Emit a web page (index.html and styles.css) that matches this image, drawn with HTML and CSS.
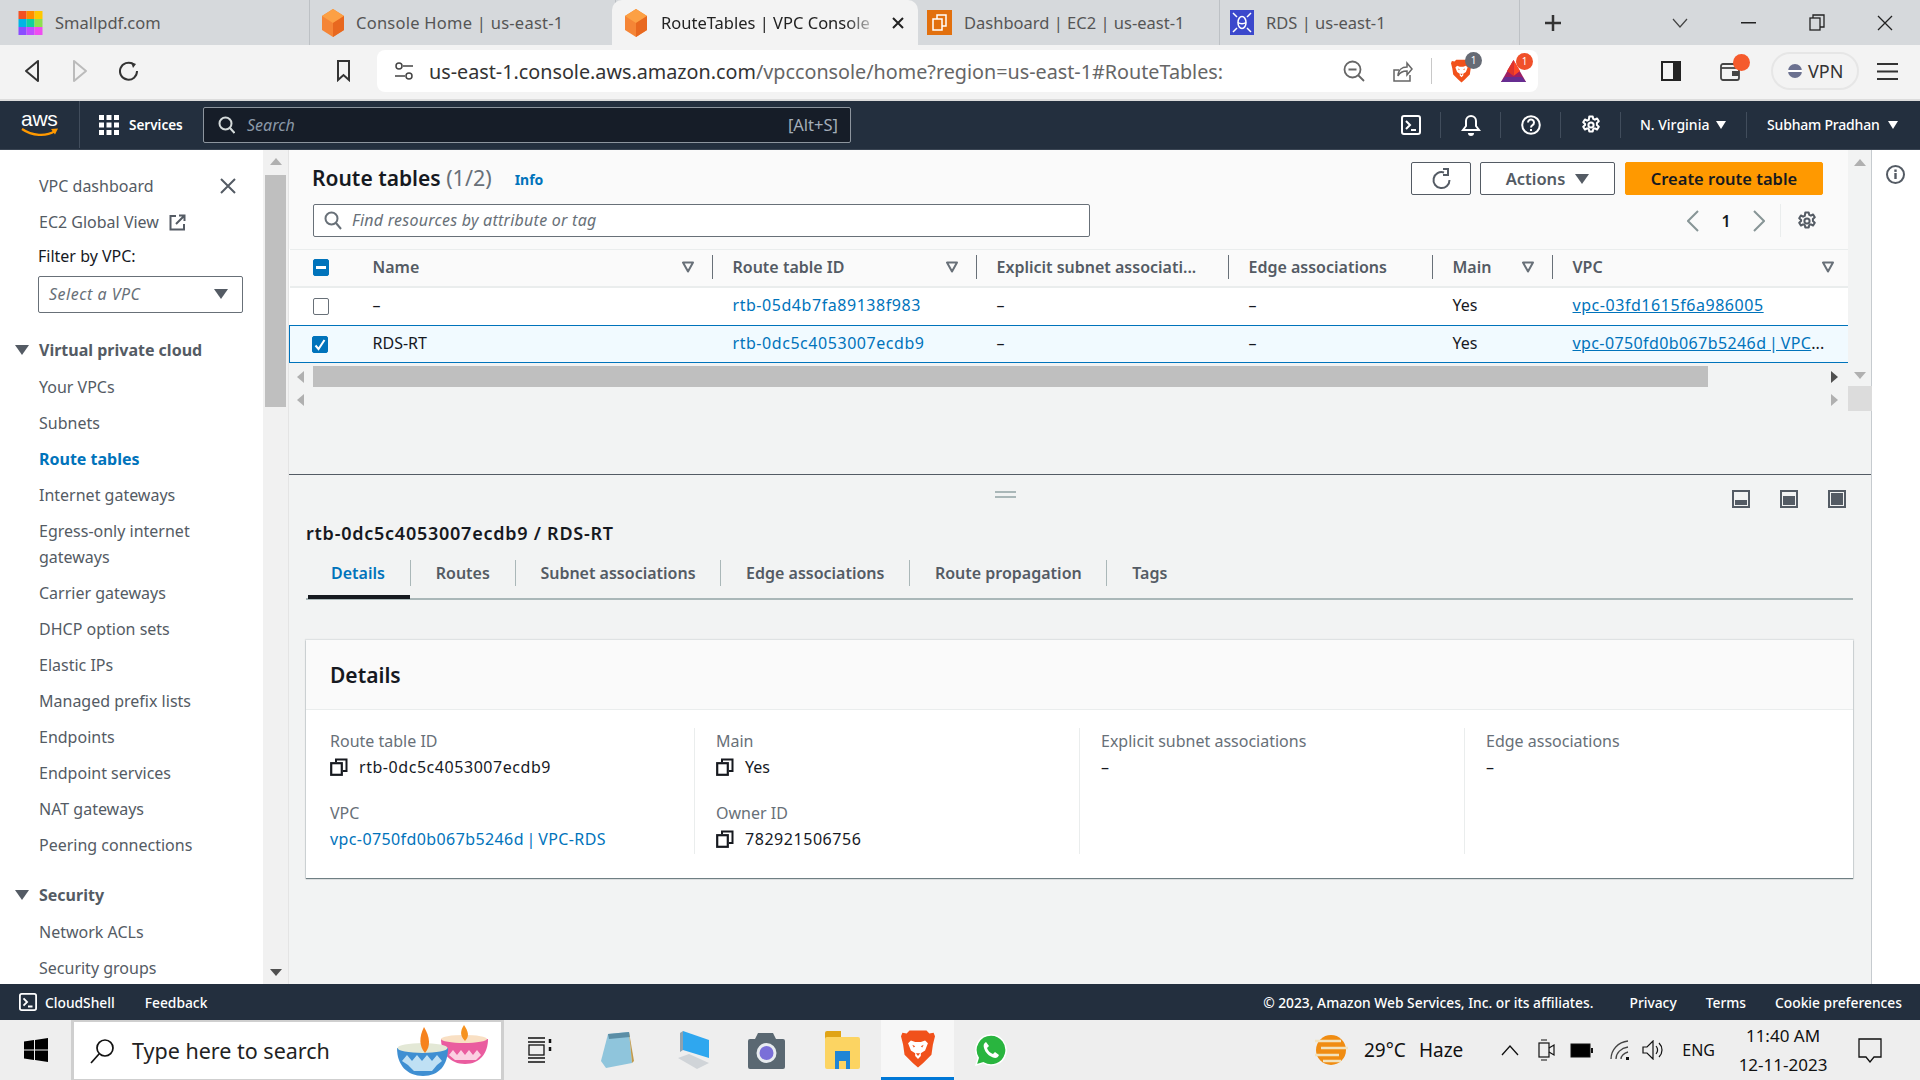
FILE: index.html
```html
<!DOCTYPE html>
<html lang="en">
<head>
    <meta charset="UTF-8">
    <meta name="viewport" content="width=device-width, initial-scale=1.0">
    <title>RouteTables | VPC Console</title>
    <link rel="stylesheet" href="styles.css">
</head>
<body>
    <svg class="defs" width="0" height="0">
        <symbol id="cube" viewBox="0 0 22 28">
            <polygon points="11,0 22,7 22,21 11,28 0,21 0,7" fill="#f58536"/>
            <polygon points="11,0 22,7 11,14 0,7" fill="#fca044"/>
            <polygon points="11,14 22,7 22,21 11,28" fill="#e8681f"/>
        </symbol>
        <symbol id="brave" viewBox="0 0 24 28">
            <path d="M6 1h12l2 2 3-.5L24 5l-1.500 6-1 7-6 6-3.500 3-3.500-3-6-6-1-7L0 5l1-2.500L4 3z" fill="#f1511b"/>
            <path d="M7 8l3 1h4l3-1 2 2-2 5-3 2v2l-2 2-2-2v-2l-3-2-2-5z" fill="#fff"/>
            <path d="M10 12l-2-1 1 2zM14 12l2-1-1 2zM10.500 17h3L12 19z" fill="#f1511b"/>
        </symbol>
        <symbol id="gear" viewBox="0 0 20 20">
            <path d="M8.300 1.500h3.400l.5 2.400 1.700.8 2.200-1.200 1.700 2.800-1.900 1.600v2.200l1.900 1.600-1.700 2.800-2.200-1.200-1.700.8-.5 2.400H8.300l-.5-2.400-1.700-.8-2.200 1.200-1.700-2.800 1.900-1.600V8.900L2.200 7.300l1.700-2.800 2.200 1.200 1.700-.8z" fill="none" stroke="currentColor" stroke-width="2" stroke-linejoin="round"/>
            <circle cx="10" cy="10" r="2.600" fill="none" stroke="currentColor" stroke-width="2"/>
        </symbol>
        <symbol id="filter" viewBox="0 0 12 12">
            <path d="M1 1.500h10L6 10.500z" fill="none" stroke="#687078" stroke-width="2" stroke-linejoin="round"/>
        </symbol>
        <symbol id="copy" viewBox="0 0 18 18">
            <rect x="1.200" y="5.200" width="10.600" height="11.600" fill="#fff" stroke="#16191f" stroke-width="2.200"/>
            <path d="M6 4V1.500h10.500V13H13" fill="none" stroke="#16191f" stroke-width="2"/>
        </symbol>
        <symbol id="shell" viewBox="0 0 20 20">
            <rect x="1" y="1" width="18" height="18" rx="2" fill="none" stroke="currentColor" stroke-width="2"/>
            <path d="M5 6l4 4-4 4M10 15h5" fill="none" stroke="currentColor" stroke-width="2"/>
        </symbol>
        <symbol id="panel" viewBox="0 0 18 18">
            <rect x="1" y="1" width="16" height="16" fill="none" stroke="#545b64" stroke-width="2"/>
        </symbol>
    </svg>

    <div class="tabstrip">
        <div class="tab tab-first">
            <svg class="favicon" width="25" height="24" viewBox="0 0 24 24">
                <rect width="8" height="8" fill="#f25022"/><rect x="8" width="8" height="8" fill="#ff8c00"/><rect x="16" width="8" height="8" fill="#ffc800"/>
                <rect y="8" width="8" height="8" fill="#00b4e6"/><rect x="8" y="8" width="8" height="8" fill="#10cfa0"/><rect x="16" y="8" width="8" height="8" fill="#8ee04e"/>
                <rect y="16" width="8" height="8" fill="#8a4dff"/><rect x="8" y="16" width="8" height="8" fill="#c04dff"/><rect x="16" y="16" width="8" height="8" fill="#f04df0"/>
            </svg>
            <span class="tab-title">Smallpdf.com</span>
        </div>
        <div class="tab tab-second">
            <svg class="favicon" width="22" height="28"><use href="#cube"/></svg>
            <span class="tab-title">Console Home | us-east-1</span>
        </div>
        <div class="tab tab-active">
            <svg class="favicon" width="22" height="28"><use href="#cube"/></svg>
            <span class="tab-title">RouteTables | VPC Console</span>
            <svg class="tab-close" width="14" height="14" viewBox="0 0 14 14"><path d="M2 2l10 10M12 2L2 12" stroke="#222" stroke-width="2"/></svg>
        </div>
        <div class="tab tab-ec2">
            <svg class="favicon" width="25" height="25" viewBox="0 0 25 25">
                <rect width="25" height="25" fill="#e2700e"/>
                <rect x="10" y="5" width="9" height="11" fill="none" stroke="#fff" stroke-width="1.500"/>
                <rect x="6" y="9" width="9" height="11" fill="#e2700e" stroke="#fff" stroke-width="1.500"/>
            </svg>
            <span class="tab-title">Dashboard | EC2 | us-east-1</span>
        </div>
        <div class="tab tab-rds">
            <svg class="favicon" width="24" height="25" viewBox="0 0 24 25">
                <rect width="24" height="25" fill="#3b48cc"/>
                <ellipse cx="12" cy="12.500" rx="4" ry="6" fill="none" stroke="#fff" stroke-width="1.500"/>
                <path d="M8 12.500c2 1.500 6 1.500 8 0M3 3l4 4M21 3l-4 4M3 22l4-4M21 22l-4-4" fill="none" stroke="#fff" stroke-width="1.500"/>
            </svg>
            <span class="tab-title">RDS | us-east-1</span>
        </div>
        <svg class="new-tab" width="18" height="18" viewBox="0 0 18 18"><path d="M9 1v16M1 9h16" stroke="#333" stroke-width="2.500"/></svg>
        <svg class="win-chevron" width="16" height="10" viewBox="0 0 16 10"><path d="M1 1l7 8 7-8" fill="none" stroke="#444" stroke-width="1.200"/></svg>
        <svg class="win-min" width="15" height="2"><rect width="15" height="1.500" fill="#222"/></svg>
        <svg class="win-restore" width="16" height="17" viewBox="0 0 16 17"><rect x="1" y="4" width="10" height="12" fill="none" stroke="#222" stroke-width="1.300"/><path d="M4 4V1h11v12h-4" fill="none" stroke="#222" stroke-width="1.300"/></svg>
        <svg class="win-close" width="16" height="16" viewBox="0 0 16 16"><path d="M1 1l14 14M15 1L1 15" stroke="#222" stroke-width="1.300"/></svg>
    </div>

    <div class="toolbar">
        <svg class="tb-back" width="16" height="24" viewBox="0 0 16 24"><path d="M14 2v20L2 12z" fill="none" stroke="#333" stroke-width="2" stroke-linejoin="round"/></svg>
        <svg class="tb-forward" width="16" height="24" viewBox="0 0 16 24"><path d="M2 2v20l12-10z" fill="none" stroke="#bbb" stroke-width="2" stroke-linejoin="round"/></svg>
        <svg class="tb-reload" width="20" height="22" viewBox="0 0 20 22"><path d="M14 4a8.500 8.500 0 1 0 4 7" fill="none" stroke="#333" stroke-width="2"/><path d="M12 2l5 2-3 4" fill="#333"/></svg>
        <svg class="tb-bookmark" width="13" height="22" viewBox="0 0 13 22"><path d="M1 1h11v19l-5.500-5L1 20z" fill="none" stroke="#333" stroke-width="2"/></svg>
        <div class="urlbar">
            <svg class="url-tune" width="18" height="20" viewBox="0 0 18 20"><circle cx="4" cy="5" r="3" fill="none" stroke="#444" stroke-width="1.500"/><path d="M8 5h10M0 15h10" stroke="#444" stroke-width="1.500"/><circle cx="14" cy="15" r="3" fill="none" stroke="#444" stroke-width="1.500"/></svg>
            <span class="url-text"><span class="url-host">us-east-1.console.aws.amazon.com</span>/vpcconsole/home?region=us-east-1#RouteTables:</span>
            <svg class="url-zoom" width="22" height="22" viewBox="0 0 22 22"><circle cx="9.500" cy="9.500" r="8" fill="none" stroke="#666" stroke-width="1.800"/><path d="M15 15l6 6M5.500 9.500h8" stroke="#666" stroke-width="1.800"/></svg>
            <svg class="url-share" width="20" height="22" viewBox="0 0 20 22"><path d="M6 10H1v11h16v-6" fill="none" stroke="#666" stroke-width="1.500"/><path d="M5 16c0-6 4-9 9-9V3l5 6-5 6v-4c-4 0-7 1-9 5z" fill="none" stroke="#666" stroke-width="1.500"/></svg>
            <span class="url-sep"></span>
            <span class="ext ext-brave">
                <svg width="21" height="26"><use href="#brave"/></svg>
                <span class="ext-badge badge-gray">1</span>
            </span>
            <span class="ext ext-bat">
                <svg width="27" height="24" viewBox="0 0 27 24"><polygon points="13.500,1 26,23 1,23" fill="#9e1f63"/><polygon points="13.500,1 20,12 13.500,17" fill="#ff4724"/><polygon points="13.500,1 7,12 13.500,17" fill="#e0332a"/><polygon points="5,18 22,18 26,23 1,23" fill="#662d91"/></svg>
                <span class="ext-badge badge-red">1</span>
            </span>
        </div>
        <svg class="tb-sidebar" width="20" height="20" viewBox="0 0 20 20"><rect x="1" y="1" width="18" height="18" fill="none" stroke="#222" stroke-width="2"/><rect x="12" y="1" width="7" height="18" fill="#222"/></svg>
        <span class="tb-wallet">
            <svg width="20" height="20" viewBox="0 0 20 20"><rect x="1" y="3" width="18" height="16" rx="2" fill="none" stroke="#444" stroke-width="1.800"/><path d="M1 7h18" stroke="#444" stroke-width="1.800"/><rect x="12" y="10" width="7" height="5" fill="#444"/></svg>
            <span class="wallet-dot"></span>
        </span>
        <div class="vpn"><span class="vpn-dot"></span>VPN</div>
        <svg class="tb-menu" width="21" height="17" viewBox="0 0 21 17"><path d="M0 1h21M0 8.500h21M0 16h21" stroke="#333" stroke-width="2"/></svg>
    </div>

    <div class="awsnav">
        <div class="aws-logo">
            <span class="aws-word">aws</span>
            <svg width="38" height="10" viewBox="0 0 38 10"><path d="M1 1c10 7 24 8 33 2" fill="none" stroke="#f90" stroke-width="2.200"/><path d="M30 1l7-.5-3 6z" fill="#f90"/></svg>
        </div>
        <svg class="nav-grid" width="20" height="20" viewBox="0 0 20 20">
            <rect width="5" height="5" fill="#fff"/><rect x="7.500" width="5" height="5" fill="#fff"/><rect x="15" width="5" height="5" fill="#fff"/>
            <rect y="7.500" width="5" height="5" fill="#fff"/><rect x="7.500" y="7.500" width="5" height="5" fill="#fff"/><rect x="15" y="7.500" width="5" height="5" fill="#fff"/>
            <rect y="15" width="5" height="5" fill="#fff"/><rect x="7.500" y="15" width="5" height="5" fill="#fff"/><rect x="15" y="15" width="5" height="5" fill="#fff"/>
        </svg>
        <span class="nav-services">Services</span>
        <div class="nav-search">
            <svg width="17" height="18" viewBox="0 0 17 18"><circle cx="7.500" cy="7.500" r="6" fill="none" stroke="#d5dbdb" stroke-width="2"/><path d="M12 12l4.500 5" stroke="#d5dbdb" stroke-width="2"/></svg>
            <span class="nav-search-text">Search</span>
            <span class="nav-search-key">[Alt+S]</span>
        </div>
        <div class="nav-right">
            <span class="nav-cell nav-cell-first"><svg width="20" height="20"><use href="#shell"/></svg></span>
            <span class="nav-cell">
                <svg width="20" height="22" viewBox="0 0 20 22"><path d="M10 2a5 5 0 0 1 5 5v5l3 4H2l3-4V7a5 5 0 0 1 5-5z" fill="none" stroke="#fff" stroke-width="2"/><path d="M7 19a3 3 0 0 0 6 0" fill="#fff"/></svg>
            </span>
            <span class="nav-cell">
                <svg width="20" height="20" viewBox="0 0 20 20"><circle cx="10" cy="10" r="8.800" fill="none" stroke="#fff" stroke-width="2"/><path d="M7 7.500a3 3 0 1 1 4.500 2.600c-1 .6-1.500 1.200-1.500 2.400" fill="none" stroke="#fff" stroke-width="2"/><rect x="9" y="14" width="2" height="2" fill="#fff"/></svg>
            </span>
            <span class="nav-cell"><svg width="20" height="20"><use href="#gear"/></svg></span>
            <span class="nav-cell nav-menu nav-region">N. Virginia <i class="caret"></i></span>
            <span class="nav-cell nav-menu nav-user">Subham Pradhan <i class="caret"></i></span>
        </div>
    </div>

    <div class="console">
        <nav class="sidebar">
            <div class="side-top">
                <a class="side-item">VPC dashboard</a>
                <svg class="side-close" width="16" height="16" viewBox="0 0 16 16"><path d="M1 1l14 14M15 1L1 15" stroke="#545b64" stroke-width="2"/></svg>
            </div>
            <a class="side-item">EC2 Global View
                <svg class="side-ext" width="17" height="17" viewBox="0 0 17 17"><path d="M7 2H1.500v13.500H15V10" fill="none" stroke="#545b64" stroke-width="2"/><path d="M10 1.500h5.500V7M15 2L7 10" fill="none" stroke="#545b64" stroke-width="2"/></svg>
            </a>
            <div class="side-label">Filter by VPC:</div>
            <div class="side-select"><em>Select a VPC</em><i class="caret caret-big"></i></div>
            <div class="side-head"><i class="caret caret-big"></i>Virtual private cloud</div>
            <a class="side-item">Your VPCs</a>
            <a class="side-item">Subnets</a>
            <a class="side-item side-current">Route tables</a>
            <a class="side-item">Internet gateways</a>
            <a class="side-item side-two">Egress-only internet gateways</a>
            <a class="side-item">Carrier gateways</a>
            <a class="side-item">DHCP option sets</a>
            <a class="side-item">Elastic IPs</a>
            <a class="side-item">Managed prefix lists</a>
            <a class="side-item">Endpoints</a>
            <a class="side-item">Endpoint services</a>
            <a class="side-item">NAT gateways</a>
            <a class="side-item">Peering connections</a>
            <div class="side-head side-head-2"><i class="caret caret-big"></i>Security</div>
            <a class="side-item">Network ACLs</a>
            <a class="side-item">Security groups</a>
        </nav>
        <div class="side-scroll">
            <i class="arrow-up"></i>
            <div class="side-thumb"></div>
            <i class="arrow-down arrow-dark"></i>
        </div>

        <main class="main">
            <div class="top-pane">
                <div class="top-scrollarea">
                    <div class="list-head">
                        <div class="list-title-row">
                            <h1 class="list-title">Route tables <span class="list-count">(1/2)</span></h1>
                            <a class="info-link">Info</a>
                            <div class="list-actions">
                                <button class="btn btn-icon">
                                    <svg width="20" height="22" viewBox="0 0 20 22"><path d="M13 4.500a8 8 0 1 0 5.500 7.500" fill="none" stroke="#545b64" stroke-width="2"/><path d="M12 1h5v6h-5" fill="none" stroke="#545b64" stroke-width="2"/></svg>
                                </button>
                                <button class="btn btn-actions">Actions <i class="caret caret-big"></i></button>
                                <button class="btn btn-primary">Create route table</button>
                            </div>
                        </div>
                        <div class="list-filter-row">
                            <div class="find-box">
                                <svg width="18" height="19" viewBox="0 0 18 19"><circle cx="7.500" cy="7.500" r="6" fill="none" stroke="#687078" stroke-width="2"/><path d="M12 12l5 6" stroke="#687078" stroke-width="2"/></svg>
                                <em>Find resources by attribute or tag</em>
                            </div>
                            <div class="pager">
                                <svg width="12" height="22" viewBox="0 0 12 22"><path d="M11 1L1 11l10 10" fill="none" stroke="#879596" stroke-width="2"/></svg>
                                <span class="pager-num">1</span>
                                <svg width="12" height="22" viewBox="0 0 12 22"><path d="M1 1l10 10L1 21" fill="none" stroke="#879596" stroke-width="2"/></svg>
                                <span class="pager-gear"><svg width="20" height="20"><use href="#gear"/></svg></span>
                            </div>
                        </div>
                    </div>

                    <table class="rt-table">
                        <colgroup>
                            <col class="c-check"><col class="c-name"><col class="c-id"><col class="c-explicit"><col class="c-edge"><col class="c-main"><col class="c-vpc">
                        </colgroup>
                        <thead>
                            <tr>
                                <th><span class="check check-mixed"></span></th>
                                <th><div class="th-in">Name<svg width="12" height="12"><use href="#filter"/></svg></div></th>
                                <th><div class="th-in">Route table ID<svg width="12" height="12"><use href="#filter"/></svg></div></th>
                                <th><div class="th-in">Explicit subnet associati...</div></th>
                                <th><div class="th-in">Edge associations</div></th>
                                <th><div class="th-in">Main<svg width="12" height="12"><use href="#filter"/></svg></div></th>
                                <th><div class="th-in th-last">VPC<svg width="12" height="12"><use href="#filter"/></svg></div></th>
                            </tr>
                        </thead>
                        <tbody>
                            <tr>
                                <td><span class="check"></span></td>
                                <td>–</td>
                                <td><a class="link id-text">rtb-05d4b7fa89138f983</a></td>
                                <td>–</td>
                                <td>–</td>
                                <td>Yes</td>
                                <td><a class="link link-u id-text">vpc-03fd1615f6a986005</a></td>
                            </tr>
                            <tr class="row-selected">
                                <td>
                                    <span class="check check-on">
                                        <svg width="16" height="16" viewBox="0 0 16 16"><path d="M3.500 8.500l3 3.500 6-9" fill="none" stroke="#fff" stroke-width="2"/></svg>
                                    </span>
                                </td>
                                <td>RDS-RT</td>
                                <td><a class="link id-text">rtb-0dc5c4053007ecdb9</a></td>
                                <td>–</td>
                                <td>–</td>
                                <td>Yes</td>
                                <td><a class="link link-u id-text id-tight">vpc-0750fd0b067b5246d | VPC</a>...</td>
                            </tr>
                        </tbody>
                    </table>

                    <div class="hscroll hscroll-dark">
                        <i class="arrow-left"></i>
                        <div class="hthumb"></div>
                        <i class="arrow-right arrow-dark"></i>
                    </div>
                    <div class="hscroll hscroll-outer">
                        <i class="arrow-left"></i>
                        <i class="arrow-right"></i>
                    </div>
                </div>
                <div class="top-vscroll">
                    <i class="arrow-up"></i>
                    <i class="arrow-down"></i>
                    <div class="top-corner"></div>
                </div>
            </div>

            <section class="split">
                <div class="split-handle"></div>
                <div class="split-icons">
                    <svg width="18" height="18" viewBox="0 0 18 18"><use href="#panel"/><rect x="3" y="10" width="12" height="5" fill="#545b64"/></svg>
                    <svg width="18" height="18" viewBox="0 0 18 18"><use href="#panel"/><rect x="3" y="6" width="12" height="9" fill="#545b64"/></svg>
                    <svg width="18" height="18" viewBox="0 0 18 18"><use href="#panel"/><rect x="3" y="3" width="12" height="12" fill="#545b64"/></svg>
                </div>
                <h2 class="split-title">rtb-0dc5c4053007ecdb9 / RDS-RT</h2>
                <div class="tabs">
                    <a class="dtab dtab-active">Details</a>
                    <a class="dtab">Routes</a>
                    <a class="dtab">Subnet associations</a>
                    <a class="dtab">Edge associations</a>
                    <a class="dtab">Route propagation</a>
                    <a class="dtab dtab-last">Tags</a>
                </div>
                <div class="card">
                    <h3 class="card-head">Details</h3>
                    <div class="card-body">
                        <div class="kv-col">
                            <div class="kv-label">Route table ID</div>
                            <div class="kv-value id-text"><svg width="18" height="18"><use href="#copy"/></svg>rtb-0dc5c4053007ecdb9</div>
                            <div class="kv-label kv-gap">VPC</div>
                            <div class="kv-value"><a class="link id-text id-tight">vpc-0750fd0b067b5246d | VPC-RDS</a></div>
                        </div>
                        <div class="kv-col">
                            <div class="kv-label">Main</div>
                            <div class="kv-value"><svg width="18" height="18"><use href="#copy"/></svg>Yes</div>
                            <div class="kv-label kv-gap">Owner ID</div>
                            <div class="kv-value id-text"><svg width="18" height="18"><use href="#copy"/></svg>782921506756</div>
                        </div>
                        <div class="kv-col">
                            <div class="kv-label">Explicit subnet associations</div>
                            <div class="kv-value">–</div>
                        </div>
                        <div class="kv-col kv-col-last">
                            <div class="kv-label">Edge associations</div>
                            <div class="kv-value">–</div>
                        </div>
                    </div>
                </div>
            </section>
        </main>

        <aside class="rail">
            <svg width="19" height="19" viewBox="0 0 19 19"><circle cx="9.500" cy="9.500" r="8.500" fill="none" stroke="#545b64" stroke-width="2"/><rect x="8.300" y="8" width="2.400" height="6" fill="#545b64"/><rect x="8.300" y="4.500" width="2.400" height="2.400" fill="#545b64"/></svg>
        </aside>
    </div>

    <footer class="footer">
        <svg width="18" height="18"><use href="#shell"/></svg>
        <span class="foot-shell">CloudShell</span>
        <span class="foot-feedback">Feedback</span>
        <span class="foot-copy">© 2023, Amazon Web Services, Inc. or its affiliates.</span>
        <span class="foot-link foot-privacy">Privacy</span>
        <span class="foot-link">Terms</span>
        <span class="foot-link">Cookie preferences</span>
    </footer>

    <div class="taskbar">
        <svg class="task-win" width="24" height="24" viewBox="0 0 24 24"><path d="M0 3.500l10-1.400v9.400H0zM11 2l13-2v11.500H11zM0 12.500h10v9.400L0 20.500zM11 12.500h13V24l-13-2z" fill="#000"/></svg>
        <div class="task-search">
            <svg width="26" height="26" viewBox="0 0 26 26"><circle cx="16" cy="10" r="8" fill="none" stroke="#111" stroke-width="1.700"/><path d="M10 16L2 25" stroke="#111" stroke-width="1.700"/></svg>
            <span class="task-search-text">Type here to search</span>
            <svg class="task-candles" width="92" height="52" viewBox="0 0 92 52">
                <path d="M44 14h47c0 14-8 25-23 25S44 28 44 14z" fill="#ea5c9f"/>
                <ellipse cx="67" cy="14" rx="23" ry="4" fill="#f9e0c4"/>
                <path d="M52 30l4-5 4 5 4-5 4 5 4-5 4 5 4-5 4 5-5 5H58z" fill="#fbd0e2"/>
                <path d="M67 0c4 6 6 11 1 16-5-5-5-10-1-16z" fill="#f6921e"/>
                <path d="M0 23h51c0 17-9 28-25 28S0 40 0 23z" fill="#3f8fd2"/>
                <ellipse cx="25.500" cy="23" rx="25" ry="5" fill="#e3e8d6"/>
                <path d="M5 36l5-6 5 6 5-6 5 6 5-6 5 6 5-6 5 6-5 4-5 6H17l-6-6z" fill="#bfe0f4"/>
                <path d="M27 2c6 10 7 19 1 26-6-7-6-16-1-26z" fill="#f6821e"/>
            </svg>
        </div>
        <svg class="task-view" width="24" height="26" viewBox="0 0 24 26"><path d="M0 1h17M0 25h17M0 5h17M0 21h17" stroke="#111" stroke-width="1.300"/><rect x="1" y="8" width="15" height="10" fill="none" stroke="#111" stroke-width="1.300"/><path d="M22 2v4M22 10v4" stroke="#111" stroke-width="2.500"/></svg>
        <svg class="task-app task-notepad" width="34" height="38" viewBox="0 0 34 38"><polygon points="8,3 29,1 32,32 6,37 1,30" fill="#8fc5dc"/><polygon points="8,3 29,1 30,6 9,8" fill="#5b8ea6"/><polygon points="29,1 34,30 32,32" fill="#c19a4b"/></svg>
        <svg class="task-app task-pc" width="36" height="40" viewBox="0 0 36 40"><polygon points="8,1 34,10 34,28 8,20" fill="#2fa7ef"/><polygon points="8,1 5,3 5,22 8,20" fill="#8fa2b0"/><polygon points="3,28 14,24 34,33 22,39" fill="#d0d4d8"/></svg>
        <svg class="task-app task-camera" width="37" height="38" viewBox="0 0 37 38"><path d="M10 2h15l3 6h7a2 2 0 0 1 2 2v26a2 2 0 0 1-2 2H2a2 2 0 0 1-2-2V10a2 2 0 0 1 2-2h5z" fill="#5a6872"/><circle cx="18.500" cy="22" r="10" fill="#e8ecf0"/><circle cx="18.500" cy="22" r="7" fill="#7a6fd8"/></svg>
        <svg class="task-app task-folder" width="35" height="38" viewBox="0 0 35 38"><path d="M0 2a2 2 0 0 1 2-2h14v8H0z" fill="#e0a416"/><rect y="6" width="35" height="32" rx="2" fill="#fcd462"/><path d="M10 38V24h15v14h-4v-8h-7v8z" fill="#1f85d6"/><rect x="10" y="20" width="15" height="5" fill="#1f85d6"/></svg>
        <div class="task-active"><svg width="34" height="40"><use href="#brave"/></svg></div>
        <svg class="task-app task-wa" width="32" height="32" viewBox="0 0 32 32"><path d="M16 1a15 15 0 0 0-12.800 22.800L1 31l7.400-2.100A15 15 0 1 0 16 1z" fill="#29b53f" stroke="#fff" stroke-width="1.500"/><path d="M11 8c-2 1-3 3-2 6 1.500 5 5 8 9 9.500 3 1 5 0 6-2.500l-4-3-2 2c-3-1-5-3-6-6l2-2z" fill="#fff"/></svg>

        <div class="tray">
            <svg class="tray-sun" width="33" height="30" viewBox="0 0 33 30">
                <circle cx="16" cy="15" r="15" fill="#f08c12"/>
                <path d="M0 6h26M6 13h27M0 20h24M8 26h18" stroke="#f2e2bd" stroke-width="2.500"/>
            </svg>
            <span class="tray-temp">29°C</span>
            <span class="tray-haze">Haze</span>
            <svg class="tray-up" width="18" height="11" viewBox="0 0 18 11"><path d="M1 10l8-9 8 9" fill="none" stroke="#111" stroke-width="1.300"/></svg>
            <svg class="tray-cam" width="17" height="24" viewBox="0 0 17 24"><rect x="1" y="5" width="10" height="14" fill="none" stroke="#111" stroke-width="1.200"/><path d="M11 10l5-3v10l-5-3" fill="none" stroke="#111" stroke-width="1.200"/><path d="M3 2h6M3 22h6" stroke="#111" stroke-width="1.200"/></svg>
            <svg class="tray-batt" width="23" height="15" viewBox="0 0 23 15"><rect x="1" y="1" width="19" height="13" fill="#000" stroke="#111"/><rect x="21" y="5" width="2" height="5" fill="#111"/></svg>
            <svg class="tray-wifi" width="19" height="20" viewBox="0 0 19 20"><path d="M1 19C1 10 8 2 18 1M6 19c0-6 5-11 12-12M11 19c0-3 3-6 7-7" fill="none" stroke="#444" stroke-width="1.300"/><rect x="16" y="17" width="3" height="3" fill="#111"/></svg>
            <svg class="tray-vol" width="22" height="20" viewBox="0 0 22 20"><path d="M1 7h4l6-6v18l-6-6H1z" fill="none" stroke="#111" stroke-width="1.200"/><path d="M14 6c2 2.500 2 5.500 0 8M17 3c4 4 4 10 0 14" fill="none" stroke="#111" stroke-width="1.200"/></svg>
            <span class="tray-lang">ENG</span>
            <div class="tray-clock"><div>11:40 AM</div><div>12-11-2023</div></div>
            <svg class="tray-note" width="24" height="25" viewBox="0 0 24 25"><path d="M1 1h22v18h-7l-4 5-4-5H1z" fill="none" stroke="#111" stroke-width="1.300"/></svg>
        </div>
    </div>
</body>
</html>
```

FILE: styles.css
```css
* {
    box-sizing: border-box;
}
html, body {
    margin: 0;
    height: 100%;
}
body {
    width: 1920px;
    height: 1080px;
    overflow: hidden;
    display: flex;
    flex-direction: column;
    font-family: "Noto Sans", sans-serif;
    font-size: 16px;
    color: #16191f;
    background-color: #f2f3f3;
}
.defs {
    position: absolute;
}
svg {
    flex: none;
    display: block;
}
h1, h2, h3 {
    margin: 0;
}
em {
    font-style: italic;
}

/* browser tabs */
.tabstrip {
    height: 45px;
    flex: none;
    display: flex;
    align-items: center;
    background-color: #d6d9dc;
}
.tab {
    width: 306px;
    height: 45px;
    flex: none;
    display: flex;
    align-items: center;
    padding-left: 16px;
    color: #555;
    border-right: 1px solid #bdc1c5;
}
.tab-first {
    padding-left: 18px;
    width: 310px;
}
.tab-second {
    padding-left: 12px;
}
.tab-second .tab-title {
    letter-spacing: .25px;
}
.tab-active {
    width: 306px;
    margin-left: -4px;
    padding-left: 13px;
    background-color: #f3f3f3;
    border-right: 0;
    border-radius: 10px 10px 0 0;
    color: #222;
}
.tab-ec2 {
    width: 302px;
    padding-left: 9px;
}
.tab-rds {
    width: 300px;
    padding-left: 10px;
}
.tab-title {
    margin-left: 12px;
    white-space: nowrap;
    font-size: 16.500px;
}
.tab-active .tab-title {
    width: 218px;
    margin-left: 14px;
    overflow: hidden;
    -webkit-mask-image: linear-gradient(to right, #000 85%, transparent);
    mask-image: linear-gradient(to right, #000 85%, transparent);
}
.tab-close {
    margin-left: 12px;
}
.new-tab {
    margin-left: 24px;
}
.win-chevron {
    margin-left: 110px;
}
.win-min {
    margin-left: 53px;
}
.win-restore {
    margin-left: 53px;
}
.win-close {
    margin-left: 52px;
}

/* browser toolbar */
.toolbar {
    height: 56px;
    flex: none;
    display: flex;
    align-items: center;
    padding: 0 0 2px 24px;
    background-color: #f3f3f3;
    border-bottom: 2px solid #dcdcdc;
}
.tb-forward {
    margin-left: 32px;
}
.tb-reload {
    margin-left: 31px;
}
.tb-bookmark {
    margin-left: 198px;
}
.urlbar {
    width: 1161px;
    height: 42px;
    margin-left: 27px;
    display: flex;
    align-items: center;
    padding-left: 18px;
    background-color: #fff;
    border-radius: 8px;
}
.url-text {
    margin-left: 16px;
    width: 906px;
    white-space: nowrap;
    font-size: 19.750px;
    color: #666;
}
.url-host {
    color: #333;
}
.url-zoom {
    margin-left: 8px;
}
.url-share {
    margin-left: 28px;
}
.url-sep {
    width: 1px;
    height: 26px;
    margin-left: 18px;
    background-color: #c8c8c8;
}
.ext {
    position: relative;
    display: block;
}
.ext-brave {
    margin-left: 19px;
}
.ext-bat {
    margin-left: 28px;
}
.ext-badge {
    position: absolute;
    top: -6px;
    right: -10px;
    width: 17px;
    height: 17px;
    border-radius: 50%;
    color: #fff;
    font-size: 10px;
    line-height: 17px;
    text-align: center;
}
.badge-gray {
    background-color: #666b75;
}
.badge-red {
    right: -6px;
    background-color: #f0502a;
}
.tb-sidebar {
    margin-left: 123px;
}
.tb-wallet {
    position: relative;
    margin-left: 39px;
}
.wallet-dot {
    position: absolute;
    top: -7px;
    left: 13px;
    width: 17px;
    height: 17px;
    border-radius: 50%;
    background-color: #f55a2c;
}
.vpn {
    width: 88px;
    height: 38px;
    margin-left: 31px;
    display: flex;
    align-items: center;
    padding-left: 15px;
    border: 2px solid #e6e6e6;
    border-radius: 19px;
    font-size: 18px;
    color: #333;
}
.vpn-dot {
    width: 14px;
    height: 14px;
    margin-right: 6px;
    border-radius: 50%;
    background: linear-gradient(#6b7190 0 6px, #fff 6px 8px, #6b7190 8px);
}
.tb-menu {
    margin-left: 18px;
}

/* aws top nav */
.awsnav {
    height: 49px;
    flex: none;
    display: flex;
    align-items: center;
    padding-bottom: 1px;
    background-color: #232f3e;
    color: #fff;
    border-bottom: 1px solid #3a4553;
}
.aws-logo {
    width: 80px;
    height: 47px;
    padding-left: 21px;
    display: flex;
    flex-direction: column;
    justify-content: center;
    border-right: 1px solid #414d5c;
}
.aws-word {
    height: 16px;
    font-family: "Liberation Sans", sans-serif;
    font-size: 21px;
    line-height: 14px;
    letter-spacing: -.3px;
    color: #fff;
}
.nav-grid {
    margin-left: 19px;
}
.nav-services {
    margin-left: 10px;
    width: 74px;
    font-size: 13.500px;
    font-weight: 600;
}
.nav-search {
    width: 648px;
    height: 36px;
    display: flex;
    align-items: center;
    padding: 0 12px 0 14px;
    background-color: #161d28;
    border: 1px solid #8d959e;
    border-radius: 2px;
}
.nav-search-text {
    margin-left: 12px;
    flex: 1;
    font-style: italic;
    color: #8b99a8;
}
.nav-search-key {
    color: #a4aeb9;
    font-size: 16.500px;
}
.nav-right {
    margin-left: auto;
    display: flex;
    align-items: center;
    padding-right: 22px;
}
.nav-cell {
    height: 26px;
    padding: 0 19px 0 20px;
    display: flex;
    align-items: center;
    border-left: 1px solid #414d5c;
}
.nav-cell-first {
    border-left: 0;
}
.nav-menu {
    font-size: 14px;
    font-weight: 500;
    white-space: pre;
}
.nav-region {
    padding-left: 19px;
    padding-right: 20px;
}
.nav-user {
    padding-right: 0;
    letter-spacing: -.2px;
}
.caret {
    width: 0;
    height: 0;
    display: inline-block;
    margin-left: 5px;
    border-style: solid;
    border-width: 8px 5px 0;
    border-color: #fff transparent transparent;
}
.nav-region .caret {
    margin-left: 3px;
}
.caret-big {
    border-width: 10px 7px 0;
    border-color: #545b64 transparent transparent;
}

/* console body */
.console {
    height: 834px;
    flex: none;
    display: flex;
    overflow: hidden;
}
.sidebar {
    width: 263px;
    flex: none;
    padding-top: 18px;
    overflow: hidden;
    background-color: #fff;
    color: #545b64;
}
.side-item {
    height: 36px;
    display: flex;
    align-items: center;
    padding-left: 39px;
    color: #545b64;
    white-space: nowrap;
}
.side-top {
    display: flex;
    align-items: center;
    justify-content: space-between;
    padding-right: 27px;
}
.side-ext {
    margin-left: 10px;
}
.side-label {
    height: 32px;
    padding-left: 38px;
    line-height: 32px;
    color: #16191f;
}
.side-select {
    width: 205px;
    height: 37px;
    margin: 4px 0 0 38px;
    padding: 0 14px 2px 10px;
    display: flex;
    align-items: center;
    justify-content: space-between;
    border: 1px solid #687078;
    border-radius: 2px;
}
.side-select em {
    color: #687078;
    letter-spacing: .5px;
}
.side-head {
    height: 36px;
    margin-top: 19px;
    margin-bottom: 1px;
    padding-left: 15px;
    display: flex;
    align-items: center;
    font-weight: 700;
}
.side-head .caret {
    margin: 0 10px 0 0;
}
.side-head-2 {
    margin-top: 14px;
}
.side-current {
    font-weight: 700;
    color: #0073bb;
}
.side-two {
    height: 62px;
    padding-right: 40px;
    white-space: normal;
    line-height: 26px;
}
.side-scroll {
    width: 26px;
    flex: none;
    padding: 8px 2px 8px;
    display: flex;
    flex-direction: column;
    align-items: center;
    background-color: #f1f1f1;
    border-right: 1px solid #e4e4e4;
}
.side-thumb {
    width: 21px;
    height: 232px;
    margin-top: 10px;
    background-color: #bfbfbf;
}
.arrow-up, .arrow-down {
    width: 0;
    height: 0;
    display: block;
    border-style: solid;
}
.arrow-up {
    border-width: 0 6px 7px;
    border-color: transparent transparent #b0b0b0;
}
.arrow-down {
    margin-top: auto;
    border-width: 7px 6px 0;
    border-color: #b0b0b0 transparent transparent;
}
.arrow-dark {
    border-top-color: #505050;
}

/* main */
.main {
    width: 1583px;
    flex: none;
    display: flex;
    flex-direction: column;
    border-right: 1px solid #c6cbcf;
}
.top-pane {
    height: 325px;
    flex: none;
    display: flex;
    background-color: #f2f3f3;
    border-bottom: 1px solid #545b64;
}
.top-scrollarea {
    width: 1559px;
    flex: none;
}
.list-head {
    height: 99px;
    background-color: #fafafa;
    padding: 12px 25px 0 24px;
}
.list-title-row {
    height: 33px;
    display: flex;
    align-items: center;
}
.list-title {
    margin: -1px 0 0 -1px;
    font-size: 21px;
    font-weight: 600;
    line-height: 28px;
    color: #16191f;
}
.list-count {
    font-size: 21.500px;
    font-weight: 400;
    color: #687078;
}
.info-link {
    margin: 2px 0 0 23px;
    font-size: 14px;
    font-weight: 700;
    color: #0073bb;
}
.list-actions {
    margin-left: auto;
    display: flex;
    gap: 9px;
}
.btn {
    height: 33px;
    display: flex;
    align-items: center;
    justify-content: center;
    font-family: inherit;
    font-size: 16.500px;
    font-weight: 600;
    border: 1px solid #545b64;
    border-radius: 2px;
    background-color: #fff;
    color: #545b64;
}
.btn-icon {
    width: 60px;
}
.btn-actions {
    width: 135px;
}
.btn-actions .caret {
    margin-left: 10px;
}
.btn-primary {
    width: 198px;
    margin-left: 1px;
    background-color: #ff9900;
    border-color: #ff9900;
    color: #16191f;
}
.list-filter-row {
    height: 33px;
    margin-top: 9px;
    display: flex;
    align-items: center;
    justify-content: space-between;
}
.find-box {
    width: 777px;
    height: 33px;
    display: flex;
    align-items: center;
    padding: 0 0 1px 10px;
    background-color: #fff;
    border: 1px solid #687078;
    border-radius: 2px;
    color: #687078;
}
.find-box em {
    margin-left: 10px;
    letter-spacing: .25px;
}
.pager {
    height: 33px;
    display: flex;
    align-items: center;
    color: #16191f;
    margin-right: 6px;
}
.pager-num {
    width: 54px;
    text-align: center;
    font-weight: 600;
}
.pager-gear {
    height: 33px;
    margin-left: 15px;
    padding-left: 16px;
    display: flex;
    align-items: center;
    border-left: 1px solid #eaeded;
    color: #545b64;
}
.rt-table {
    width: 1558px;
    table-layout: fixed;
    border-collapse: collapse;
    background-color: #fff;
}
.c-check { width: 63px; }
.c-name { width: 360px; }
.c-id { width: 264px; }
.c-explicit { width: 252px; }
.c-edge { width: 204px; }
.c-main { width: 120px; }
.c-vpc { width: 295px; }
.rt-table th {
    height: 37px;
    padding: 0 0 1px;
    text-align: left;
    font-weight: 600;
    color: #545b64;
    background-color: #fafafa;
    border-top: 1px solid #eaeded;
    border-bottom: 2px solid #eaeded;
}
.rt-table th:first-child, .rt-table td:first-child {
    padding-left: 23px;
}
.th-in {
    height: 24px;
    display: flex;
    align-items: center;
    justify-content: space-between;
    padding: 0 18px 0 20px;
    white-space: nowrap;
    border-right: 1px solid #687078;
}
.th-last {
    border-right: 0;
    padding-right: 14px;
}
.rt-table td {
    height: 39px;
    padding: 0 0 3px 20px;
    white-space: nowrap;
    color: #16191f;
}
.rt-table td:first-child {
    padding-bottom: 0;
}
.row-selected td {
    height: 37px;
    background-color: #f1faff;
    border-top: 1px solid #0073bb;
    border-bottom: 1px solid #0073bb;
}
.row-selected td:first-child {
    border-left: 1px solid #0073bb;
    padding-left: 22px;
}
.link {
    color: #0073bb;
}
.link-u {
    text-decoration: underline;
}
.id-text {
    letter-spacing: .55px;
}
.id-tight {
    letter-spacing: .4px;
    word-spacing: -2px;
}
.check {
    width: 16px;
    height: 17px;
    display: block;
    background-color: #fff;
    border: 1px solid #687078;
    border-radius: 2px;
}
.check-mixed {
    position: relative;
    background-color: #0073bb;
    border-color: #0073bb;
}
.check-mixed::after {
    content: "";
    position: absolute;
    left: 2px;
    right: 2px;
    top: 6px;
    height: 3px;
    background-color: #fff;
}
.check-on {
    background-color: #0073bb;
    border-color: #0073bb;
}
.check-on svg {
    margin: 0 0 0 -1px;
}
.hscroll {
    display: flex;
    align-items: center;
    height: 24px;
    padding: 0 10px 0 8px;
}
.hscroll-dark {
    height: 24px;
    padding-top: 3px;
}
.hscroll-outer {
    height: 26px;
}
.arrow-left, .arrow-right {
    width: 0;
    height: 0;
    display: block;
    border-style: solid;
}
.arrow-left {
    border-width: 6px 7px 6px 0;
    border-color: transparent #b0b0b0 transparent transparent;
}
.arrow-right {
    margin-left: auto;
    border-width: 6px 0 6px 7px;
    border-color: transparent transparent transparent #b0b0b0;
}
.hscroll .arrow-dark {
    border-top-color: transparent;
    border-left-color: #505050;
}
.hthumb {
    width: 1395px;
    height: 21px;
    margin-left: 9px;
    background-color: #bfbfbf;
}
.top-vscroll {
    width: 23px;
    flex: none;
    display: flex;
    flex-direction: column;
    align-items: center;
    padding-top: 9px;
    background-color: #f2f3f3;
}
.top-vscroll .arrow-down {
    margin-top: 206px;
}
.top-corner {
    width: 24px;
    height: 25px;
    margin-top: 7px;
    background-color: #dcdcdc;
}

/* split panel */
.split {
    flex: 1;
    padding: 0 18px 0 17px;
    background-color: #f2f3f3;
    overflow: hidden;
}
.split-handle {
    width: 21px;
    height: 7px;
    margin: 16px 0 0 689px;
    border-top: 2px solid #aab7b8;
    border-bottom: 2px solid #aab7b8;
}
.split-icons {
    height: 18px;
    margin-top: -8px;
    padding-right: 7px;
    display: flex;
    justify-content: flex-end;
    gap: 30px;
}
.split-title {
    margin-top: 12px;
    height: 26px;
    font-size: 18px;
    font-weight: 600;
    letter-spacing: .75px;
    line-height: 26px;
    color: #16191f;
}
.tabs {
    height: 40px;
    margin-top: 14px;
    display: flex;
    border-bottom: 2px solid #aab7b8;
}
.dtab {
    height: 26px;
    padding: 0 24.750px;
    font-weight: 600;
    line-height: 26px;
    color: #545b64;
    border-right: 1px solid #aab7b8;
    position: relative;
}
.dtab-active {
    width: 103px;
    margin-left: 2px;
    padding: 0 23px;
    color: #0073bb;
}
.dtab-active::after {
    content: "";
    position: absolute;
    left: 0;
    right: 0;
    top: 35px;
    height: 4px;
    background-color: #16191f;
}
.dtab-last {
    border-right: 0;
}
.card {
    margin-top: 40px;
    background-color: #fff;
    box-shadow: 0 1px 1px 0 rgba(0, 28, 36, .5), 0 0 1px 1px rgba(0, 28, 36, .08);
}
.card-head {
    height: 70px;
    padding-left: 24px;
    font-size: 21px;
    font-weight: 600;
    line-height: 70px;
    color: #16191f;
    background-color: #fafafa;
    border-bottom: 1px solid #eaeded;
}
.card-body {
    display: grid;
    grid-template-columns: 389px 385px 385px 1fr;
    padding: 18px 0 24px;
    height: 168px;
}
.kv-col {
    padding: 0 0 0 24px;
    border-right: 1px solid #eaeded;
}
.kv-col + .kv-col {
    padding-left: 21px;
}
.kv-col-last {
    border-right: 0;
}
.kv-label {
    height: 26px;
    line-height: 26px;
    color: #687078;
}
.kv-gap {
    margin-top: 20px;
}
.kv-value {
    height: 26px;
    display: flex;
    align-items: center;
    line-height: 26px;
    color: #16191f;
    white-space: nowrap;
}
.kv-value svg {
    margin-right: 11px;
}

/* console footer */
.footer {
    height: 36px;
    flex: none;
    display: flex;
    align-items: center;
    padding: 0 18px 0 19px;
    background-color: #232f3e;
    color: #fff;
    font-size: 13.800px;
    font-weight: 500;
}
.foot-shell {
    margin-left: 8px;
}
.foot-feedback {
    margin-left: 30px;
}
.foot-copy {
    margin-left: auto;
}
.foot-link {
    margin-left: 29px;
}
.foot-privacy {
    margin-left: 36px;
}

/* windows taskbar */
.taskbar {
    height: 60px;
    flex: none;
    display: flex;
    align-items: center;
    padding-left: 24px;
    background-color: #eeeeee;
    color: #111;
}
.task-search {
    width: 433px;
    height: 60px;
    margin-left: 23px;
    display: flex;
    align-items: center;
    padding-left: 15px;
    background-color: #fff;
    border: 3px solid #cfcfcf;
    border-bottom-width: 1px;
    border-top-width: 2px;
}
.task-search-text {
    margin-left: 17px;
    font-size: 21.500px;
    color: #222;
    white-space: nowrap;
}
.task-candles {
    margin-left: auto;
    margin-right: 12px;
}
.task-view {
    margin-left: 24px;
}
.task-notepad {
    margin-left: 48px;
}
.task-pc {
    margin-left: 41px;
}
.task-camera {
    margin-left: 37px;
}
.task-folder {
    margin-left: 40px;
}
.task-active {
    width: 73px;
    height: 60px;
    margin-left: 21px;
    display: flex;
    align-items: center;
    justify-content: center;
    background-color: #f7f7f7;
    border-bottom: 3px solid #0078d7;
}
.task-wa {
    margin-left: 21px;
}
.tray {
    margin-left: auto;
    height: 60px;
    display: flex;
    align-items: center;
    padding-right: 38px;
    font-size: 19px;
}
.tray-temp {
    margin-left: 16px;
}
.tray-haze {
    margin-left: 13px;
}
.tray-up {
    margin-left: 38px;
}
.tray-cam {
    margin-left: 19px;
}
.tray-batt {
    margin-left: 15px;
}
.tray-wifi {
    margin-left: 17px;
}
.tray-vol {
    margin-left: 13px;
}
.tray-lang {
    margin-left: 18px;
    font-size: 16px;
}
.tray-clock {
    width: 96px;
    margin-left: 20px;
    font-size: 17px;
    line-height: 29px;
    text-align: center;
    white-space: nowrap;
}
.tray-note {
    margin-left: 27px;
}

/* right rail */
.rail {
    flex: 1;
    padding: 15px 0 0 14px;
    background-color: #fff;
}
```
